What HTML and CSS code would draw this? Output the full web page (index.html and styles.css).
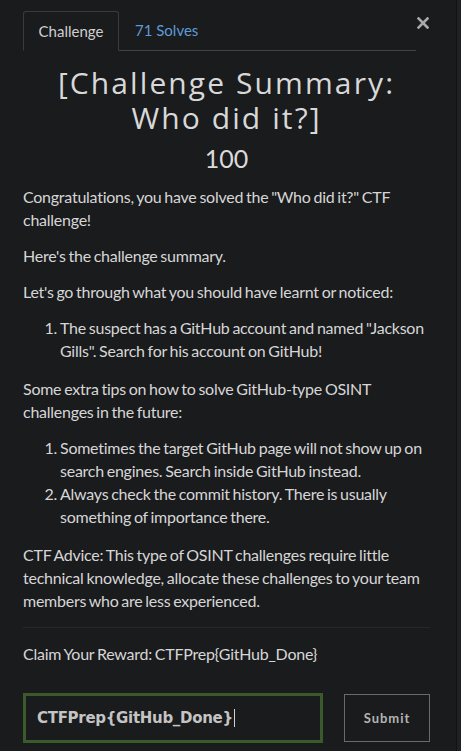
FILE: index.html
```html
<!DOCTYPE html>
<html>
<head>
<meta charset="utf-8">
<link rel="stylesheet" href="styles.css">
</head>
<body>
<div class="modal">
  <div class="top">
    <nav class="tabs">
      <span class="tab active">Challenge</span>
      <span class="tab link">71 Solves</span>
    </nav>
    <svg class="close" width="12" height="12" viewBox="0 0 12 12"><path d="M1.5 1.5L10.5 10.5M10.5 1.5L1.5 10.5" stroke="#a9a9a9" stroke-width="2.6" stroke-linecap="square"/></svg>
  </div>
  <h2 class="title">[Challenge Summary:<br>Who did it?]</h2>
  <h3 class="value">100</h3>
  <div class="desc">
    <p>Congratulations, you have solved the "Who did it?" CTF challenge!</p>
    <p>Here's the challenge summary.</p>
    <p>Let's go through what you should have learnt or noticed:</p>
    <ol>
      <li>The suspect has a GitHub account and named "Jackson Gills". Search for his account on GitHub!</li>
    </ol>
    <p>Some extra tips on how to solve GitHub-type OSINT challenges in the future:</p>
    <ol>
      <li>Sometimes the target GitHub page will not show up on search engines. Search inside GitHub instead.</li>
      <li>Always check the commit history. There is usually something of importance there.</li>
    </ol>
    <p>CTF Advice: This type of OSINT challenges require little technical knowledge, allocate these challenges to your team members who are less experienced.</p>
    <hr>
    <p>Claim Your Reward: CTFPrep{GitHub_Done}</p>
  </div>
  <div class="submit-row">
    <div class="input">CTFPrep{GitHub_Done}<span class="caret"></span></div>
    <button class="btn">Submit</button>
  </div>
</div>
</body>
</html>
```
FILE: styles.css
```css
html, body {
  margin: 0;
  padding: 0;
  background: #202124;
}
.modal {
  width: 457px;
  height: 751px;
  box-sizing: border-box;
  background: #1a1b1d;
  border-right: 1px solid #101112;
  padding: 11px 26px 0 23px;
  font-family: Lato, "Noto Sans", sans-serif;
  color: #d6d6d6;
  overflow: hidden;
}
.top {
  display: flex;
  align-items: flex-start;
}
.tabs {
  display: flex;
  width: 393px;
  border-bottom: 1px solid #404245;
  height: 39px;
}
.tab {
  font-size: 15px;
  padding: 0 16px;
  line-height: 39px;
  height: 39px;
  box-sizing: border-box;
}
.tab.active {
  border: 1px solid #3a3b3e;
  border-bottom-color: #1a1b1d;
  border-radius: 3px 3px 0 0;
  color: #cfcfcf;
  height: 40px;
  width: 96px;
  padding: 0;
  text-align: center;
  line-height: 38px;
}
.tab.link {
  color: #5e9ad6;
}
.close {
  margin-left: 1px;
  margin-top: 6px;
  flex: none;
}
.title {
  margin: 14px 0 0;
  text-align: center;
  font-family: "Open Sans", sans-serif;
  font-weight: 400;
  font-size: 30px;
  line-height: 35px;
  letter-spacing: 2.1px;
  color: #d8d8d8;
}
.value {
  margin: 6px 0 0;
  text-align: center;
  font-family: Lato, sans-serif;
  font-weight: 400;
  font-size: 25px;
  line-height: 34px;
  color: #dadada;
}
.desc {
  margin-top: 10px;
  font-size: 16px;
  line-height: 23px;
  letter-spacing: -0.25px;
  word-spacing: -1px;
}
.desc p {
  margin: 0 0 13px;
}
.desc ol {
  margin: 0 0 15px;
  padding-left: 37px;
}
.desc hr {
  border: 0;
  border-top: 1px solid #26282a;
  margin: 15px 0 14px;
}
.submit-row {
  display: flex;
  align-items: center;
  margin-top: 28px;
}
.input {
  width: 300px;
  height: 50px;
  box-sizing: border-box;
  border: 3px solid #3b5a2c;
  display: flex;
  align-items: center;
  padding-left: 11px;
  font-family: "DejaVu Sans", sans-serif;
  font-weight: bold;
  font-size: 15px;
  letter-spacing: -0.3px;
  color: #c4c4c4;
}
.caret {
  display: inline-block;
  width: 1px;
  height: 18px;
  background: #d0d0d0;
  margin-left: 1px;
}
.btn {
  margin-left: 21px;
  width: 86px;
  height: 48px;
  background: transparent;
  border: 1px solid #6a6a6a;
  color: #b4b4b4;
  font-family: Lato, sans-serif;
  font-weight: bold;
  font-size: 13px;
  letter-spacing: 1px;
}
```
